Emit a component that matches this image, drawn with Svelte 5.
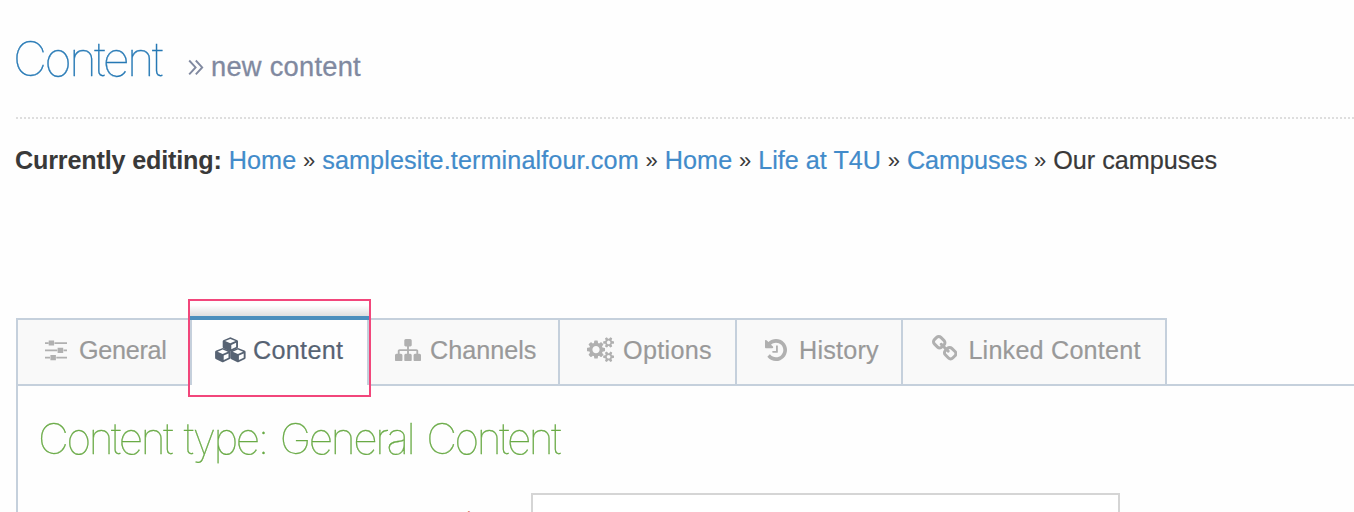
<script>
  const crumbs = [
    { text: 'Home', gap: 0.1 },
    { text: 'samplesite.terminalfour.com', gap: 0.11 },
    { text: 'Home', gap: 0.1 },
    { text: 'Life at T4U', gap: 0 },
    { text: 'Campuses', gap: 0 }
  ];
  const smallCog = 'v140q0 16-149 31-12 27-30 52 51 113 51 138 0 4-4 7-122 71-124 71-8 0-46-47t-52-68q-20 2-30 2t-30-2q-14 21-52 68t-46 47q-2 0-124-71-4-3-4-7 0-25 51-138-18-25-30-52-149-15-149-31v-140q0-16 149-31 13-29 30-52-51-113-51-138 0-4 4-7 4-2 35-20t59-34 30-16q8 0 46 46.5t52 67.5q20-2 30-2t30 2q51-71 92-112l6-2q4 0 124 70 4 3 4 7 0 25-51 138 17 23 30 52 149 15 149 31z';
  const icons = {
    channels: { box: '0 128 1792 1536', w: 26, h: 22.3, d: 'M1792 1248v320q0 40-28 68t-68 28h-320q-40 0-68-28t-28-68v-320q0-40 28-68t68-28h96v-192h-512v192h96q40 0 68 28t28 68v320q0 40-28 68t-68 28h-320q-40 0-68-28t-28-68v-320q0-40 28-68t68-28h96v-192h-512v192h96q40 0 68 28t28 68v320q0 40-28 68t-68 28h-320q-40 0-68-28t-28-68v-320q0-40 28-68t68-28h96v-192q0-52 38-90t90-38h512v-192h-96q-40 0-68-28t-28-68v-320q0-40 28-68t68-28h320q40 0 68 28t28 68v320q0 40-28 68t-68 28h-96v192h512q52 0 90 38t38 90v192h96q40 0 68 28t28 68z' },
    options: { box: '-64 0 1920 1792', w: 27, h: 25.2, d: 'M832 896q0-106-75-181t-181-75-181 75-75 181 75 181 181 75 181-75 75-181zm768 512q0-52-38-90t-90-38-90 38-38 90q0 53 37.5 90.5t90.5 37.5 90.5-37.5 37.5-90.5zm0-1024q0-52-38-90t-90-38-90 38-38 90q0 53 37.5 90.5t90.5 37.5 90.5-37.5 37.5-90.5zm-384 421v185q0 10-7 19.5t-16 10.5l-155 24q-11 35-32 76 34 48 90 115 7 11 7 20 0 12-7 19-23 30-82.5 89.5t-78.5 59.5q-11 0-21-7l-115-90q-37 19-77 31-11 108-23 155-7 24-30 24h-186q-11 0-20-7.5t-10-17.5l-23-153q-34-10-75-31l-118 89q-7 7-20 7-11 0-21-8-144-133-144-160 0-9 7-19 10-14 41-53t47-61q-23-44-35-82l-152-24q-10-1-17-9.5t-7-19.5v-185q0-10 7-19.5t16-10.5l155-24q11-35 32-76-34-48-90-115-7-11-7-20 0-12 7-20 22-30 82-89t79-59q11 0 21 7l115 90q34-18 77-32 11-108 23-154 7-24 30-24h186q11 0 20 7.5t10 17.5l23 153q34 10 75 31l118-89q8-7 20-7 11 0 21 8 144 133 144 160 0 8-7 19-12 16-42 54t-45 60q23 48 34 82l152 23q10 2 17 10.5t7 19.5zM1856 1338' + smallCog + 'M1856 314' + smallCog },
    history: { box: '128 128 1536 1536', w: 22, h: 22, d: 'M1664 896q0 156-61 298t-164 245-245 164-298 61q-172 0-327-72.5t-264-204.5q-7-10-6.5-22.5t8.5-20.5l137-138q10-9 25-9 16 2 23 12 73 95 179 147t225 52q104 0 198.5-40.5t163.5-109.5 109.5-163.5 40.5-198.5-40.5-198.5-109.5-163.5-163.5-109.5-198.5-40.5q-98 0-188 35.5t-160 101.5l137 138q31 30 14 69-17 40-59 40h-448q-26 0-45-19t-19-45v-448q0-42 40-59 39-17 69 14l130 129q107-101 244.5-156.5t284.5-55.5q156 0 298 61t245 164 164 245 61 298zm-640-288v448q0 14-9 23t-23 9h-320q-14 0-23-9t-9-23v-64q0-14 9-23t23-9h224v-352q0-14 9-23t23-9h64q14 0 23 9t9 23z' },
    linked: { box: '80 16 1632 1632', w: 25.4, h: 25.4, d: 'M1520 1216q0-40-28-68l-208-208q-28-28-68-28-42 0-72 32 3 3 19 18.5t21.5 21.5 15 19 13 25.5 3.5 27.5q0 40-28 68t-68 28q-15 0-27.5-3.5t-25.5-13-19-15-21.5-21.5-18.5-19q-33 31-33 73 0 40 28 68l206 207q27 27 68 27 40 0 68-26l147-146q28-28 28-67zm-703-705q0-40-28-68l-206-207q-28-28-68-28-39 0-68 27l-147 146q-28 28-28 67 0 40 28 68l208 208q27 27 68 27 42 0 72-31-3-3-19-18.5t-21.5-21.5-15-19-13-25.5-3.5-27.5q0-40 28-68t68-28q15 0 27.5 3.5t25.5 13 19 15 21.5 21.5 18.5 19q33-31 33-73zm895 705q0 120-85 203l-147 146q-83 83-203 83-121 0-204-85l-206-207q-83-83-83-203 0-123 88-209l-88-88q-86 88-208 88-120 0-204-84l-208-208q-84-84-84-204t85-203l147-146q83-83 203-83 121 0 204 85l206 207q83 83 83 203 0 123-88 209l88 88q86-88 208-88 120 0 204 84l208 208q84 84 84 204z' }
  };
  const tabs = [
    { id: 'general', label: 'General' },
    { id: 'content', label: 'Content' },
    { id: 'channels', label: 'Channels' },
    { id: 'options', label: 'Options' },
    { id: 'history', label: 'History' },
    { id: 'linked', label: 'Linked Content' }
  ];
</script>

<main>
  <header>
    <h1>Content</h1>
    <svg class="angles" width="16" height="17" viewBox="0 0 16 17"><path d="M1.2 1.5 7.6 8.4 1.2 15.3M7.8 1.5 14.2 8.4 7.8 15.3" /></svg>
    <small>new content</small>
  </header>

  <nav class="crumbs">
    <b>Currently editing:</b>
    {#each crumbs as crumb}
      <a href="#top" style="letter-spacing: {crumb.gap}px">{crumb.text}</a><i>»</i>
    {/each}
    <span>Our campuses</span>
  </nav>

  <div class="tabs">
    {#each tabs as tab}
      <div class="tab {tab.id}">
        {#if tab.id === 'general'}
          <svg width="22" height="21" viewBox="0 0 22 21">
            <path d="M0 2.2h3.5v1.7H0zM3.7.5h5.4v5.1H3.7zM9.5 2.2H22v1.7H9.5zM0 9.5h12.2v1.7H0zM12.6 7.8h5.6v5.1h-5.6zM18.6 9.5H22v1.7h-3.4zM0 16.8h5v1.7H0zM5.4 15.1h5.5v5.1H5.4zM11.3 16.8H22v1.7H11.3z" />
          </svg>
        {:else if tab.id === 'content'}
          <svg width="31" height="26" viewBox="0 0 31 26">
            {#each [[7.6, 0.3], [0, 11], [15.2, 11]] as [x, y]}
              <g transform="translate({x} {y})">
                <path class="cube" d="M7.8 0 14.2 2.6Q15.4 3 15.4 4V9.8Q15.4 10.8 14.3 11.3L8.6 14Q7.7 14.4 6.8 14L1.2 11.3Q.1 10.8.1 9.8V4Q.1 3 1.3 2.6Z" />
                <path class="face" d="M7.7 1.6 12.9 3.8 7.7 6 2.5 3.8ZM8.7 7.6 13.5 5.5V9.7L8.7 12Z" />
              </g>
            {/each}
          </svg>
        {:else}
          {@const icon = icons[tab.id]}
          <svg width={icon.w} height={icon.h} viewBox={icon.box}><path d={icon.d} /></svg>
        {/if}
        <span>{tab.label}</span>
        {#if tab.id === 'content'}<div class="marker"></div>{/if}
      </div>
    {/each}
  </div>

  <section>
    <h2>Content type: General Content</h2>
    <div class="row">
      <em>*</em>
      <div class="field"></div>
    </div>
  </section>
</main>

<style>
  :global(body) { background: #fefefe; }
  main {
    box-sizing: border-box;
    height: 512px;
    overflow: hidden;
    padding-left: 16px;
    font-family: "Liberation Sans", Arial, sans-serif;
    font-size: 25.2px;
    color: #393939;
    white-space: nowrap;
  }
  header {
    display: flex;
    align-items: baseline;
    box-sizing: border-box;
    height: 119px;
    padding-top: 29px;
    border-bottom: 2px dotted #dedede;
  }
  h1, h2 { margin: 0; font-family: Inter, sans-serif; font-weight: 100; will-change: transform; }
  h1 { width: 175px; margin-left: -3px; font-size: 47px; line-height: 60px; letter-spacing: -2.5px; color: #2679b5; -webkit-text-stroke: .35px #2679b5; }
  .angles { fill: none; stroke: #8089a0; stroke-width: 1.9; margin-right: 7px; }
  small { font-size: 27.3px; letter-spacing: .25px; color: #8089a0; -webkit-text-stroke: .3px #8089a0; }
  .crumbs { display: flex; align-items: center; height: 30px; margin-top: 26px; }
  b { margin: 0 7px 0 -1px; letter-spacing: -.18px; }
  a { color: #428bca; text-decoration: none; -webkit-text-stroke: .2px #428bca; }
  i { font-style: normal; font-size: 22px; margin: 1px 6.9px 0 6.8px; }
  .crumbs span { -webkit-text-stroke: .2px #393939; }
  .tabs { display: flex; height: 68px; margin-top: 143px; }
  .tab {
    position: relative;
    display: flex;
    align-items: center;
    box-sizing: border-box;
    height: 68px;
    padding-bottom: 4px;
    border: 2px solid #c5d0dc;
    border-left-width: 0;
    background: #f9f9f9;
    color: #999;
  }
  .tab span { -webkit-text-stroke: .2px currentColor; }
  .tab svg { fill: #b0b0b0; flex: none; }
  .general { width: 174px; border-left-width: 2px; border-right: 0; padding-left: 27px; }
  .general span { margin-left: 12px; letter-spacing: -.3px; }
  .tab.content {
    z-index: 1;
    width: 179px;
    height: 71px;
    margin-top: -2px;
    padding: 0 0 3px 25px;
    border: 0;
    background: linear-gradient(#4c8fbd, #4c8fbd) 0 0 / 100% 4px no-repeat, linear-gradient(#c5d0dc, #c5d0dc) 0 0 / 2px 69px no-repeat, linear-gradient(#c5d0dc, #c5d0dc) 100% 0 / 2px 69px no-repeat, #fefefe;
    color: #576373;
  }
  .tab.content::before {
    content: "";
    position: absolute;
    left: 0;
    right: 0;
    top: -11px;
    height: 11px;
    background: linear-gradient(rgba(0, 0, 0, 0), rgba(0, 0, 0, .12));
  }
  .tab.content svg { fill: #576373; margin-top: -1px; }
  .tab.content .face { fill: #fefefe; }
  .content span { margin-left: 7px; letter-spacing: .3px; }
  .channels { width: 191px; padding-left: 26px; }
  .channels span { margin-left: 9px; }
  .options { width: 177px; padding-left: 27px; }
  .options span { margin-left: 9px; letter-spacing: .3px; }
  .history { width: 166px; padding-left: 28px; }
  .history span { margin-left: 12px; letter-spacing: .2px; }
  .linked { width: 264px; padding-left: 29px; }
  .linked svg { margin-top: -4px; }
  .linked span { margin-left: 11px; letter-spacing: .2px; }
  .marker { position: absolute; left: -2px; top: -17px; width: 179px; height: 94px; border: 2px solid #f2467b; }
  section {
    box-sizing: border-box;
    height: 140px;
    margin-top: -2px;
    padding: 23px 0 0 20px;
    border-left: 2px solid #c5d0dc;
    border-top: 2px solid #c5d0dc;
  }
  h2 { font-size: 42.6px; line-height: 60px; letter-spacing: -2.4px; word-spacing: 3.2px; color: #69aa46; -webkit-text-stroke: .3px #69aa46; }
  .row { display: flex; margin-top: 24px; }
  em { width: 67px; margin-left: 426px; color: #e0806f; font-style: normal; line-height: 54px; }
  .field { box-sizing: border-box; width: 589px; height: 68px; border: 2px solid #d5d5d5; background: #fff; }
</style>
